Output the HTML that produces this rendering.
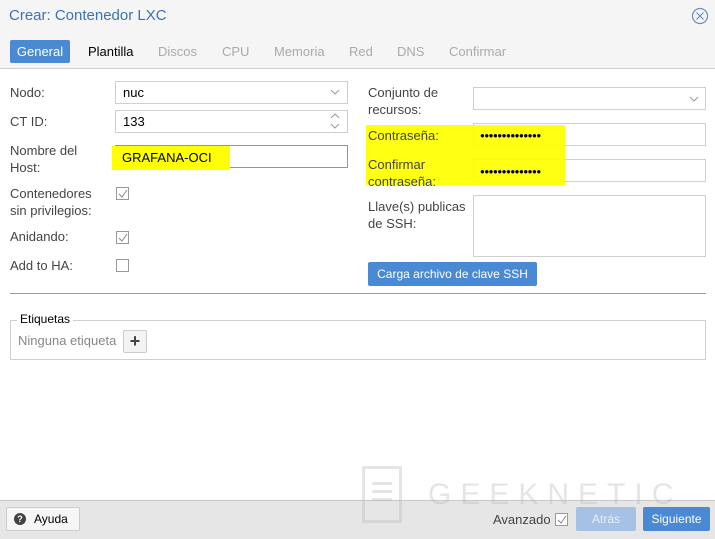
<!DOCTYPE html>
<html><head><style>
*{box-sizing:border-box;margin:0;padding:0}
body{width:715px;height:539px;position:relative;overflow:hidden;background:#fff;font-family:"Liberation Sans",Arial,sans-serif;font-size:13px;color:#333}
.a{position:absolute}
.lbl{position:absolute;color:#444;line-height:17px}
.inp{position:absolute;border:1px solid #cfcfcf;background:#fff;height:23px;padding:3px 7px;color:#000}
.cb{position:absolute;width:13px;height:13px;border:1px solid #999;background:#fff}
.hl{position:absolute;background:#ffff00}
.tab{position:absolute;top:40px;height:23px;line-height:23px;color:#aaa}
.dots{position:absolute;color:#000;font-size:8px;font-weight:bold;letter-spacing:-0.5px}
</style></head><body>
<div class="a" style="left:0;top:0;width:715px;height:69px;background:#f5f5f5;border-bottom:1px solid #d0d0d0"></div>
<div class="a" style="left:9px;top:7px;font-size:15px;color:#3a73b5">Crear: Contenedor LXC</div>
<svg class="a" style="left:691px;top:7px" width="18" height="18" viewBox="0 0 18 18"><circle cx="9" cy="9" r="7.5" fill="none" stroke="#6a8ec0" stroke-width="1.2"/><path d="M5.5 5.5l7 7M12.5 5.5l-7 7" stroke="#6a8ec0" stroke-width="1.2"/></svg>
<div class="tab" style="left:10px;width:60px;background:#4a89d3;color:#fff;border-radius:2px;text-align:center">General</div>
<div class="tab" style="left:88px;color:#000">Plantilla</div>
<div class="tab" style="left:158px">Discos</div>
<div class="tab" style="left:222px">CPU</div>
<div class="tab" style="left:274px">Memoria</div>
<div class="tab" style="left:349px">Red</div>
<div class="tab" style="left:397px">DNS</div>
<div class="tab" style="left:449px">Confirmar</div>

<div class="lbl" style="left:10px;top:84px">Nodo:</div>
<div class="inp" style="left:115px;top:81px;width:233px">nuc</div>
<svg class="a" style="left:330px;top:89px" width="10" height="6"><path d="M1 1l4 4 4-4" fill="none" stroke="#999"/></svg>
<div class="lbl" style="left:10px;top:113px">CT ID:</div>
<div class="inp" style="left:115px;top:110px;width:233px">133</div>
<svg class="a" style="left:330px;top:112px" width="10" height="18"><path d="M1 6l4-4 4 4M1 12l4 4 4-4" fill="none" stroke="#999"/></svg>
<div class="lbl" style="left:10px;top:142px">Nombre del<br>Host:</div>
<div class="inp" style="left:115px;top:145px;width:233px;border-color:#6a9fd0"></div>
<div class="hl" style="left:112px;top:146px;width:118px;height:24px"></div>
<div class="a" style="left:122px;top:150px;color:#000">GRAFANA-OCI</div>
<div class="lbl" style="left:10px;top:185px">Contenedores<br>sin privilegios:</div>
<div class="cb" style="left:116px;top:187px"></div>
<svg class="a" style="left:117px;top:188px" width="12" height="12"><path d="M2 6l3 3 5-7" fill="none" stroke="#888"/></svg>
<div class="lbl" style="left:10px;top:228px">Anidando:</div>
<div class="cb" style="left:116px;top:231px"></div>
<svg class="a" style="left:117px;top:232px" width="12" height="12"><path d="M2 6l3 3 5-7" fill="none" stroke="#888"/></svg>
<div class="lbl" style="left:10px;top:257px">Add to HA:</div>
<div class="cb" style="left:116px;top:259px"></div>

<div class="lbl" style="left:368px;top:84px">Conjunto de<br>recursos:</div>
<div class="inp" style="left:473px;top:87px;width:233px"></div>
<svg class="a" style="left:689px;top:96px" width="10" height="6"><path d="M1 1l4 4 4-4" fill="none" stroke="#999"/></svg>
<div class="inp" style="left:473px;top:123px;width:233px"></div>
<div class="inp" style="left:473px;top:159px;width:233px"></div>
<div class="hl" style="left:366px;top:125px;width:199px;height:60px;opacity:.92"></div>
<div class="lbl" style="left:368px;top:127px">Contraseña:</div>
<div class="dots" style="left:480px;top:131px">●●●●●●●●●●●●●●</div>
<div class="lbl" style="left:368px;top:156px">Confirmar<br>contraseña:</div>
<div class="dots" style="left:480px;top:167px">●●●●●●●●●●●●●●</div>
<div class="lbl" style="left:368px;top:198px">Llave(s) publicas<br>de SSH:</div>
<div class="inp" style="left:473px;top:195px;width:233px;height:62px"></div>
<div class="a" style="left:368px;top:262px;width:169px;height:24px;background:#4a89d3;border-radius:2px;color:#fff;font-size:12px;line-height:24px;text-align:center">Carga archivo de clave SSH</div>

<div class="a" style="left:10px;top:293px;width:696px;height:1px;background:#999"></div>
<div class="a" style="left:10px;top:320px;width:696px;height:40px;border:1px solid #d0d0d0"></div>
<div class="a" style="left:17px;top:312px;background:#fff;padding:0 3px;color:#000;font-size:12px">Etiquetas</div>
<div class="a" style="left:18px;top:333px;color:#888">Ninguna etiqueta</div>
<div class="a" style="left:123px;top:330px;width:24px;height:23px;background:#f3f3f3;border:1px solid #ccc;border-radius:2px;text-align:center;line-height:20px;font-size:18px;font-weight:bold;color:#444">+</div>

<div class="a" style="left:0;top:500px;width:715px;height:39px;background:#e6e6e6;border-top:1px solid #c8c8c8"></div>
<div class="a" style="left:6px;top:507px;width:74px;height:24px;background:#f6f6f6;border:1px solid #ccc;border-radius:2px;font-size:12px;line-height:22px;color:#000;padding-left:27px">Ayuda</div>
<div class="a" style="left:14px;top:513px;width:12px;height:12px;border-radius:50%;background:#444;color:#fff;font-size:9px;font-weight:bold;text-align:center;line-height:12px">?</div>

<div class="a" style="left:362px;top:466px;width:40px;height:57px;border:3px solid rgba(180,180,180,.35)"></div>
<div class="a" style="left:372px;top:482px;width:20px;height:3px;background:rgba(180,180,180,.35);box-shadow:0 8px 0 rgba(180,180,180,.35),0 16px 0 rgba(180,180,180,.35)"></div>
<div class="a" style="left:428px;top:478px;font-size:30px;letter-spacing:9px;color:rgba(180,180,180,.35);white-space:nowrap">GEEKNETIC</div>

<div class="a" style="left:493px;top:512px;color:#444;font-size:13px">Avanzado</div>
<div class="cb" style="left:555px;top:513px"></div>
<svg class="a" style="left:556px;top:514px" width="12" height="12"><path d="M2 6l3 3 5-7" fill="none" stroke="#888"/></svg>
<div class="a" style="left:576px;top:507px;width:60px;height:24px;background:#a5c1e3;border-radius:2px;color:#e8f0fa;font-size:12px;line-height:24px;text-align:center">Atrás</div>
<div class="a" style="left:643px;top:507px;width:67px;height:24px;background:#4a89d3;border-radius:2px;color:#fff;font-size:12px;line-height:24px;text-align:center">Siguiente</div>
</body></html>
